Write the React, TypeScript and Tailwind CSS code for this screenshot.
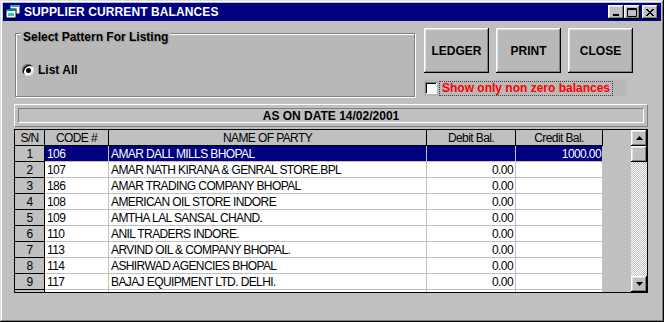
const rows: string[][] = [
  ["1", "106", "AMAR DALL MILLS BHOPAL", "", "1000.00"],
  ["2", "107", "AMAR NATH KIRANA & GENRAL STORE.BPL", "0.00", ""],
  ["3", "186", "AMAR TRADING COMPANY BHOPAL", "0.00", ""],
  ["4", "108", "AMERICAN OIL STORE INDORE", "0.00", ""],
  ["5", "109", "AMTHA LAL SANSAL CHAND.", "0.00", ""],
  ["6", "110", "ANIL TRADERS INDORE.", "0.00", ""],
  ["7", "113", "ARVIND OIL & COMPANY BHOPAL.", "0.00", ""],
  ["8", "114", "ASHIRWAD AGENCIES BHOPAL", "0.00", ""],
  ["9", "117", "BAJAJ EQUIPMENT LTD. DELHI.", "0.00", ""],
  ["", "", "", "", ""],
];

const raised =
  "shadow-[inset_-1px_-1px_#000,inset_1px_1px_#fff,inset_-2px_-2px_#808080,inset_2px_2px_#dfdfdf]";

function TitleButton({ kind }: { kind: "min" | "max" | "close" }) {
  return (
    <div className={`w-[16px] h-[14px] bg-[#c0c0c0] flex items-center justify-center ${raised}`}>
      <svg width="10" height="9" viewBox="0 0 10 9">
        {kind === "min" && <rect x="2" y="6" width="6" height="2" fill="#000" />}
        {kind === "max" && (
          <path d="M0.5 0.5h9v8h-9z M0 1.5h10" fill="none" stroke="#000" strokeWidth="1" />
        )}
        {kind === "close" && (
          <path d="M1 1l7 7M2 1l7 7M8 1l-7 7M9 1l-7 7" stroke="#000" strokeWidth="1" />
        )}
      </svg>
    </div>
  );
}

function ActionButton({ label }: { label: string }) {
  return (
    <button
      className={`w-[65px] h-[45px] bg-[#b8b8b8] text-[12px] font-bold text-black flex items-center justify-center ${raised}`}
    >
      {label}
    </button>
  );
}

function ScrollArrow({ up }: { up: boolean }) {
  return (
    <div className={`w-[16px] h-[16px] bg-[#c0c0c0] flex items-center justify-center shrink-0 ${raised}`}>
      <svg width="7" height="4" viewBox="0 0 7 4">
        <path d={up ? "M3.5 0L7 4H0z" : "M0 0h7L3.5 4z"} fill="#000" />
      </svg>
    </div>
  );
}

export default function App() {
  return (
    <div className="w-[664px] h-[322px] bg-[#c0c0c0] p-[3px] font-['Liberation_Sans',Arial,sans-serif] shadow-[inset_-1px_-1px_#000,inset_1px_1px_#dfdfdf,inset_-2px_-2px_#808080,inset_2px_2px_#fff] overflow-hidden select-none">
      {/* title bar */}
      <div className="h-[18px] bg-[#000080] flex items-center pl-[2px] pr-[3px]">
        <svg width="16" height="16" viewBox="0 0 16 16" className="shrink-0">
          <rect x="5" y="1" width="10" height="9" fill="#fff" stroke="#000080" />
          <rect x="5" y="1" width="10" height="2" fill="#40a0c0" />
          <rect x="1" y="5" width="10" height="9" fill="#fff" stroke="#000" />
          <rect x="1" y="5" width="10" height="2" fill="#008080" />
          <rect x="3" y="9" width="6" height="3" fill="#40c0c0" />
        </svg>
        <span className="ml-[3px] text-white text-[12px] font-bold tracking-[0.1px] leading-none">
          SUPPLIER CURRENT BALANCES
        </span>
        <div className="ml-auto flex items-center">
          <TitleButton kind="min" />
          <TitleButton kind="max" />
          <div className="w-[2px]" />
          <TitleButton kind="close" />
        </div>
      </div>

      {/* top controls */}
      <div className="flex mt-[7px] pl-[12px]">
        <div className="relative mt-[5px] w-[400px] h-[64px] bg-[#b8b8b8] border border-[#808080] shadow-[inset_1px_1px_#fff,1px_1px_#fff]">
          <span className="absolute left-[5px] top-[-3px] px-[2px] bg-[#b8b8b8] text-[12px] font-bold leading-[12px] text-black [text-shadow:1px_1px_0_#9a9a9a]">
            Select Pattern For Listing
          </span>
          <div className="flex items-center mt-[30px] ml-[6px]">
            <div className="w-[12px] h-[12px] rounded-full bg-white flex items-center justify-center shadow-[inset_1px_1px_#808080,inset_-1px_-1px_#dfdfdf,inset_2px_2px_#000]">
              <div className="w-[5px] h-[5px] rounded-full bg-black" />
            </div>
            <span className="ml-[4px] text-[12px] font-bold text-black leading-none">List All</span>
          </div>
        </div>

        <div className="ml-[9px] flex flex-col">
          <div className="flex gap-[7px]">
            <ActionButton label="LEDGER" />
            <ActionButton label="PRINT" />
            <ActionButton label="CLOSE" />
          </div>
          <div className="mt-[7px] w-[203px] h-[16px] bg-[#b8b8b8] flex items-center pl-[1px]">
            <div className="w-[12px] h-[12px] bg-white shadow-[inset_1px_1px_#808080,inset_-1px_-1px_#fff,inset_2px_2px_#000]" />
            <span className="ml-[2px] px-[2px] h-[15px] flex items-center border border-dotted border-[#404040] text-[12px] font-bold text-[#ff0000] leading-none">
              Show only non zero balances
            </span>
          </div>
        </div>
      </div>

      {/* date bar */}
      <div className="ml-[11px] mt-[7px] w-[634px] h-[23px] p-[3px] border border-t-white border-l-white border-b-[#808080] border-r-[#808080]">
        <div className="h-full border border-t-[#808080] border-l-[#808080] border-b-white border-r-white flex items-center justify-center text-[12px] font-bold text-black leading-none">
          AS ON DATE 14/02/2001
        </div>
      </div>

      {/* grid */}
      <div className="ml-[11px] mt-[2px] w-[634px] h-[164px] border border-black bg-[#c0c0c0] flex overflow-hidden font-['Liberation_Sans',Arial,sans-serif] text-[12px] tracking-[-0.6px] leading-none">
        <div className="w-[588px] flex flex-col">
          <div className="h-[16px] flex border-b border-black shrink-0 text-black">
            <div className="w-[30px] border-r border-black flex items-center justify-center">S/N</div>
            <div className="w-[64px] border-r border-black flex items-center justify-center">CODE #</div>
            <div className="w-[318px] border-r border-black flex items-center justify-center">NAME OF PARTY</div>
            <div className="w-[89px] border-r border-black flex items-center justify-center">Debit Bal.</div>
            <div className="w-[87px] border-r border-black flex items-center justify-center">Credit Bal.</div>
          </div>
          {rows.map((r, i) => {
            const sel = i === 0;
            const cell = sel ? "bg-[#000080] text-white" : "bg-white text-black";
            return (
              <div key={i} className="h-[16px] flex shrink-0">
                <div className="w-[30px] border-r border-b border-black bg-[#c0c0c0] flex items-center justify-center">
                  {r[0]}
                </div>
                <div className={`w-[64px] border-r border-b border-[#c0c0c0] flex items-center pl-[2px] ${cell}`}>{r[1]}</div>
                <div className={`w-[318px] border-r border-b border-[#c0c0c0] flex items-center pl-[2px] ${cell}`}>{r[2]}</div>
                <div className={`w-[89px] border-r border-b border-[#c0c0c0] flex items-center justify-end pr-[2px] ${cell}`}>{r[3]}</div>
                <div className={`w-[87px] border-r border-b border-[#c0c0c0] flex items-center justify-end pr-[1px] ${cell}`}>{r[4]}</div>
              </div>
            );
          })}
        </div>
        <div className="w-[28px] bg-[#c0c0c0]" />
        <div className="w-[16px] flex flex-col">
          <ScrollArrow up />
          <div className={`w-[16px] h-[16px] bg-[#c0c0c0] shrink-0 ${raised}`} />
          <div className="flex-1 bg-[repeating-conic-gradient(#fff_0_25%,#c0c0c0_0_50%)] [background-size:2px_2px]" />
          <ScrollArrow up={false} />
        </div>
      </div>
    </div>
  );
}
